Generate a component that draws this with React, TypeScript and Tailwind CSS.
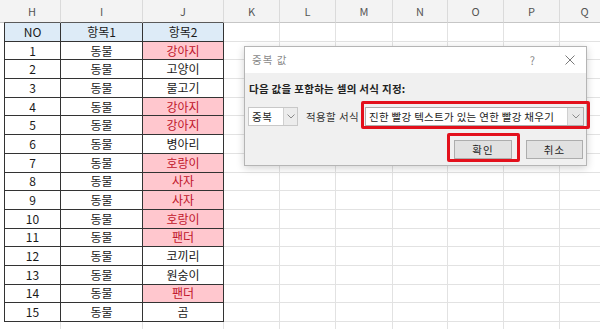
import React from 'react'

interface Item {
  no: number
  animal: string
  dup: boolean
}

const items: Item[] = [
  { no: 1, animal: '강아지', dup: true },
  { no: 2, animal: '고양이', dup: false },
  { no: 3, animal: '물고기', dup: false },
  { no: 4, animal: '강아지', dup: true },
  { no: 5, animal: '강아지', dup: true },
  { no: 6, animal: '병아리', dup: false },
  { no: 7, animal: '호랑이', dup: true },
  { no: 8, animal: '사자', dup: true },
  { no: 9, animal: '사자', dup: true },
  { no: 10, animal: '호랑이', dup: true },
  { no: 11, animal: '팬더', dup: true },
  { no: 12, animal: '코끼리', dup: false },
  { no: 13, animal: '원숭이', dup: false },
  { no: 14, animal: '팬더', dup: true },
  { no: 15, animal: '곰', dup: false },
]

// columns to the right of the table (K..Q)
const rest = [
  { key: 'K', w: 'w-[56px]' },
  { key: 'L', w: 'w-[56px]' },
  { key: 'M', w: 'w-[57px]' },
  { key: 'N', w: 'w-[55px]' },
  { key: 'O', w: 'w-[56px]' },
  { key: 'P', w: 'w-[56px]' },
  { key: 'Q', w: 'w-[50px]' },
]

const font = { fontFamily: '"Noto Sans CJK KR", "Noto Sans", sans-serif' }

const Chevron = () => (
  <svg width="8" height="5" viewBox="0 0 8 5" fill="none">
    <path d="M0.5 0.5 L4 4 L7.5 0.5" stroke="#8a8a8a" strokeWidth="1" />
  </svg>
)

const Cell = ({ className, children }: { className: string; children?: React.ReactNode }) => (
  <div className={`box-border flex shrink-0 items-center justify-center border-b border-r leading-none ${className}`}>
    {children}
  </div>
)

const RestCells = () => (
  <>
    {rest.map((c) => (
      <Cell key={c.key} className={`${c.w} h-full border-[#e2e2e2]`} />
    ))}
  </>
)

export default function App() {
  return (
    <div className="relative h-[329px] w-[600px] overflow-hidden bg-white text-[12px] text-[#1a1a1a]" style={font}>
      {/* column headers */}
      <div className="flex h-[23px] bg-[#f3f3f3] text-[11px] text-[#555]">
        <div className="box-border w-[4px] shrink-0 border-b border-[#c6c6c6]" />
        <Cell className="h-full w-[57px] border-b-[#5a5a5a] border-r-[#dadada]">H</Cell>
        <Cell className="h-full w-[82px] border-b-[#5a5a5a] border-r-[#dadada]">I</Cell>
        <Cell className="h-full w-[81px] border-b-[#5a5a5a] border-r-[#dadada]">J</Cell>
        {rest.map((c) => (
          <Cell key={c.key} className={`${c.w} h-full border-b-[#c6c6c6] border-r-[#dadada]`}>
            {c.key}
          </Cell>
        ))}
      </div>

      {/* title row */}
      <div className="flex h-[18.7px]">
        <div className="w-[4px] shrink-0" />
        <Cell className="h-full w-[57px] border-l border-[#333] bg-[#ddebf7]">NO</Cell>
        <Cell className="h-full w-[82px] border-[#333] bg-[#ddebf7]">항목1</Cell>
        <Cell className="h-full w-[81px] border-[#333] bg-[#ddebf7]">항목2</Cell>
        <RestCells />
      </div>

      {items.map((it) => (
        <div key={it.no} className="flex h-[18.7px]">
          <div className="w-[4px] shrink-0" />
          <Cell className="h-full w-[57px] border-l border-[#333]">{it.no}</Cell>
          <Cell className="h-full w-[82px] border-[#333]">동물</Cell>
          <Cell className={`h-full w-[81px] border-[#333] ${it.dup ? 'bg-[#ffc7ce] text-[#c0142a]' : ''}`}>
            {it.animal}
          </Cell>
          <RestCells />
        </div>
      ))}

      <div className="flex h-[18.7px]">
        <div className="w-[4px] shrink-0" />
        <Cell className="h-full w-[57px] border-[#e2e2e2]" />
        <Cell className="h-full w-[82px] border-[#e2e2e2]" />
        <Cell className="h-full w-[81px] border-[#e2e2e2]" />
        <RestCells />
      </div>

      {/* dialog */}
      <div className="absolute left-[244px] top-[46px] box-border flex h-[120px] w-[343px] flex-col whitespace-nowrap border border-[#b5b5b5] bg-[#f0f0f0] text-[10.5px] text-[#222] shadow-[0_2px_8px_rgba(0,0,0,0.18)]">
        <div className="flex h-[26px] shrink-0 items-center bg-white pl-[7px] pr-[11px] text-[#8a8a8a]">
          <span className="tracking-[1px]">중복 값</span>
          <span className="ml-auto mr-[30px] text-[11px]">?</span>
          <svg width="10" height="10" viewBox="0 0 10 10">
            <path d="M0.5 0.5 L9.5 9.5 M9.5 0.5 L0.5 9.5" stroke="#7a7a7a" strokeWidth="1" />
          </svg>
        </div>

        <div className="pl-[4px] pt-[9px] font-bold leading-[14px] tracking-[0.3px]">다음 값을 포함하는 셀의 서식 지정:</div>

        <div className="mt-[11px] flex h-[19px] items-center pl-[3px]">
          <div className="box-border flex h-full w-[50px] shrink-0 border border-[#c8c8c8] bg-white">
            <span className="flex flex-1 items-center pl-[3px] tracking-[0.5px]">중복</span>
            <span className="flex w-[14px] items-center justify-center border-l border-[#d0d0d0] bg-[#ececec]">
              <Chevron />
            </span>
          </div>
          <span className="ml-[8px] w-[51px] shrink-0 tracking-[0.4px] text-[#333]">적용할 서식</span>
          <div className="ml-[8px] box-border flex h-full w-[219px] shrink-0 border border-[#adadad] bg-white">
            <span className="flex flex-1 items-center pl-[3px] tracking-[0.3px]">진한 빨강 텍스트가 있는 연한 빨강 채우기</span>
            <span className="flex w-[16px] items-center justify-center border-l border-[#d0d0d0] bg-[#e8e8e8]">
              <Chevron />
            </span>
          </div>
        </div>

        <div className="mt-[14px] flex h-[19px] justify-end gap-[14px] pr-[3px]">
          <button className="box-border h-full w-[58px] border border-[#adadad] bg-[#e1e1e1] tracking-[1px]">확인</button>
          <button className="box-border h-full w-[57px] border border-[#adadad] bg-[#e1e1e1] tracking-[1px]">취소</button>
        </div>
      </div>

      {/* red highlight boxes */}
      <div className="absolute left-[361px] top-[101px] box-border h-[28px] w-[229px] rounded-[2px] border-[3px] border-[#e3101c]" />
      <div className="absolute left-[447px] top-[133px] box-border h-[29px] w-[73px] rounded-[2px] border-[3px] border-[#e3101c]" />
    </div>
  )
}
